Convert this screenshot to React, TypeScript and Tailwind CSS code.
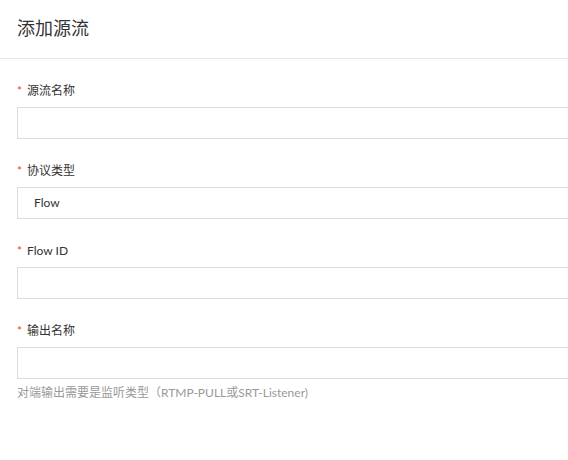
const fields = [
  { label: "源流名称", value: "" },
  { label: "协议类型", value: "Flow" },
  { label: "Flow ID", value: "" },
  { label: "输出名称", value: "", help: "对端输出需要是监听类型（RTMP-PULL或SRT-Listener)" },
];

export default function App() {
  return (
    <div
      className="w-[568px] h-[460px] overflow-hidden bg-white text-[#333]"
      style={{ fontFamily: 'Lato, "Noto Sans CJK SC", sans-serif' }}
    >
      <div className="h-[59px] border-b border-[#e8e8e8] pl-[17px] flex items-center">
        <h1 className="text-[18px] leading-none text-[#333] pb-[2px]">添加源流</h1>
      </div>
      <div className="pl-[17px] pt-[24px] flex flex-col gap-[24px]">
        {fields.map((f) => (
          <div key={f.label} className="flex flex-col">
            <label className="text-[12px] leading-[16px] text-[#333] flex items-center">
              <span className="text-[#f04134] mr-[5px] text-[12px] leading-none">*</span>
              {f.label}
            </label>
            <div className="mt-[8px] w-[620px] h-[32px] border border-[#dcdcdc] flex items-center pl-[16px] text-[12px] text-[#333]">
              {f.value}
            </div>
            {f.help && (
              <div className="mt-[6px] text-[12px] leading-[16px] text-[#999]">{f.help}</div>
            )}
          </div>
        ))}
      </div>
    </div>
  );
}
